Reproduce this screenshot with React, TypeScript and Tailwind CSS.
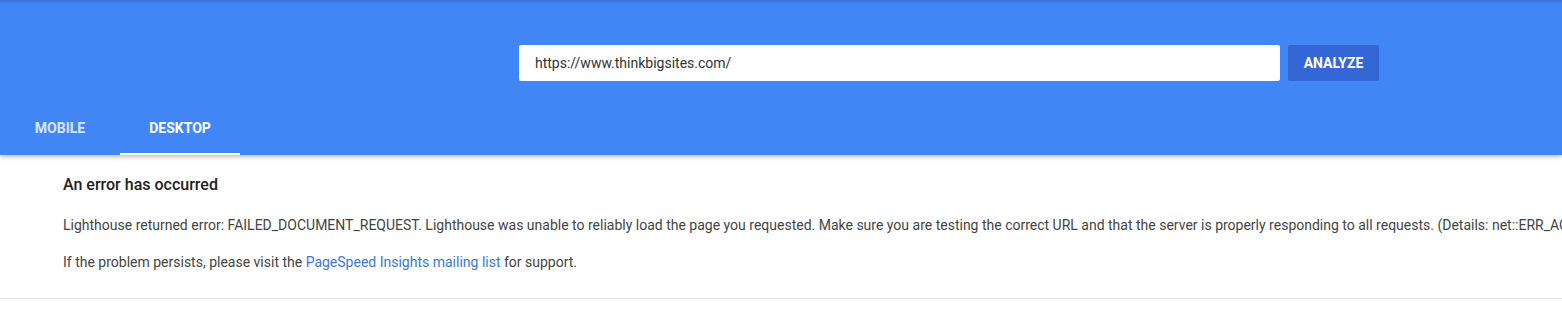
export default function App() {
  return (
    <div className="min-h-[318px] w-full overflow-hidden bg-white font-['Roboto',sans-serif]">
      <header className="relative z-10 bg-[#4285f4] shadow-[0_2px_4px_rgba(0,0,0,0.25)]">
        <div className="h-[3px] bg-gradient-to-b from-[#3a70d0] to-[#4285f4]" />
        <div className="flex items-center gap-2 pl-[519px] pt-[42px]">
          <div className="flex h-9 w-[761px] items-center rounded-[2px] bg-white px-4 text-[14px] text-[#333]">
            https://www.thinkbigsites.com/
          </div>
          <button className="h-9 w-[91px] rounded-[2px] bg-[#3367d6] text-[14px] font-bold text-white">
            ANALYZE
          </button>
        </div>
        <nav className="mt-5 flex">
          <div className="flex h-[54px] w-[120px] items-center justify-center text-[14px] font-bold text-white/80">
            MOBILE
          </div>
          <div className="flex h-[54px] w-[120px] items-center justify-center border-b-2 border-white pt-0.5 text-[14px] font-bold text-white">
            DESKTOP
          </div>
        </nav>
      </header>
      <section className="border-b border-[#e5e5e5] pb-[26px] pl-[63px] pt-[18px] whitespace-nowrap">
        <h2 className="text-[16px] leading-6 font-medium text-[#212121]">An error has occurred</h2>
        <p className="mt-[18px] text-[14px] leading-5 text-[#444]">
          Lighthouse returned error: FAILED_DOCUMENT_REQUEST. Lighthouse was unable to reliably load the page you requested. Make sure you are testing the correct URL and that the server is properly responding to all requests. (Details: net::ERR_ACCESS_DENIED)
        </p>
        <p className="mt-[17px] text-[14px] leading-5 text-[#444]">
          If the problem persists, please visit the{" "}
          <a href="#" className="text-[#3c78d8]">PageSpeed Insights mailing list</a> for support.
        </p>
      </section>
    </div>
  );
}
